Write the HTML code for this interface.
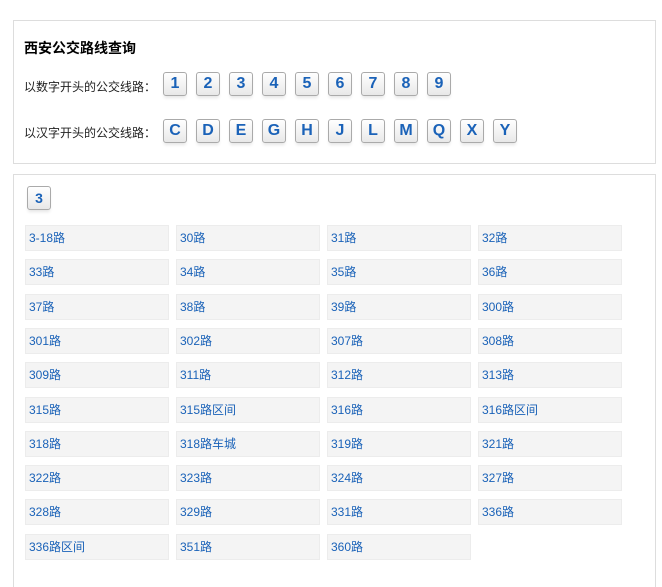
<!DOCTYPE html>
<html style="overflow:hidden"><head><meta charset="utf-8"><style>
html,body{overflow:hidden;height:587px}
body{margin:0;background:#fff;font-family:"Liberation Sans","Noto Sans CJK SC",sans-serif;width:662px;position:relative}
.box{position:absolute;border:1px solid #ddd;background:#fff}
.t{position:absolute;left:24px;top:38px;font-size:14px;font-weight:bold;color:#000}
.lb{position:absolute;left:24px;font-size:12px;color:#222}
.b{position:absolute;width:22px;height:22px;border:1px solid #aaa;border-radius:3px;background:linear-gradient(#fff,#e8e8e8);color:#1a62b8;font-weight:bold;font-size:16px;line-height:22px;text-align:center;box-shadow:0 3px 3px -1px #e6e6e6;font-family:"Liberation Sans",sans-serif}
.c{position:absolute;width:139px;height:24px;background:#f4f4f4;border:1px solid #ececec;color:#1a62b8;font-size:12px;line-height:24px;padding-left:3px;box-sizing:content-box}
</style></head><body>
<div class="box" style="left:13px;top:20px;width:641px;height:142px"></div>
<div class="box" style="left:13px;top:174px;width:641px;height:380px;border-bottom:none;height:413px"></div>
<div class="t">西安公交路线查询</div>
<div class="lb" style="top:78px">以数字开头的公交线路：</div>
<div class="lb" style="top:124px">以汉字开头的公交线路：</div>
<div id="r"></div>
<script>
var h='';
'123456789'.split('').forEach(function(c,i){h+='<div class="b" style="left:'+(163+i*33)+'px;top:72px">'+c+'</div>'});
'CDEGHJLMQXY'.split('').forEach(function(c,i){h+='<div class="b" style="left:'+(163+i*33)+'px;top:119px">'+c+'</div>'});
h+='<div class="b" style="left:27px;top:186px;font-size:14px">3</div>';
var n=['3-18路','30路','31路','32路','33路','34路','35路','36路','37路','38路','39路','300路','301路','302路','307路','308路','309路','311路','312路','313路','315路','315路区间','316路','316路区间','318路','318路车城','319路','321路','322路','323路','324路','327路','328路','329路','331路','336路','336路区间','351路','360路'];
n.forEach(function(s,i){var r=Math.floor(i/4),c=i%4;h+='<div class="c" style="left:'+(25+c*151)+'px;top:'+(225+Math.round(r*34.3))+'px">'+s+'</div>'});
document.getElementById('r').innerHTML=h;
</script>
</body></html>
